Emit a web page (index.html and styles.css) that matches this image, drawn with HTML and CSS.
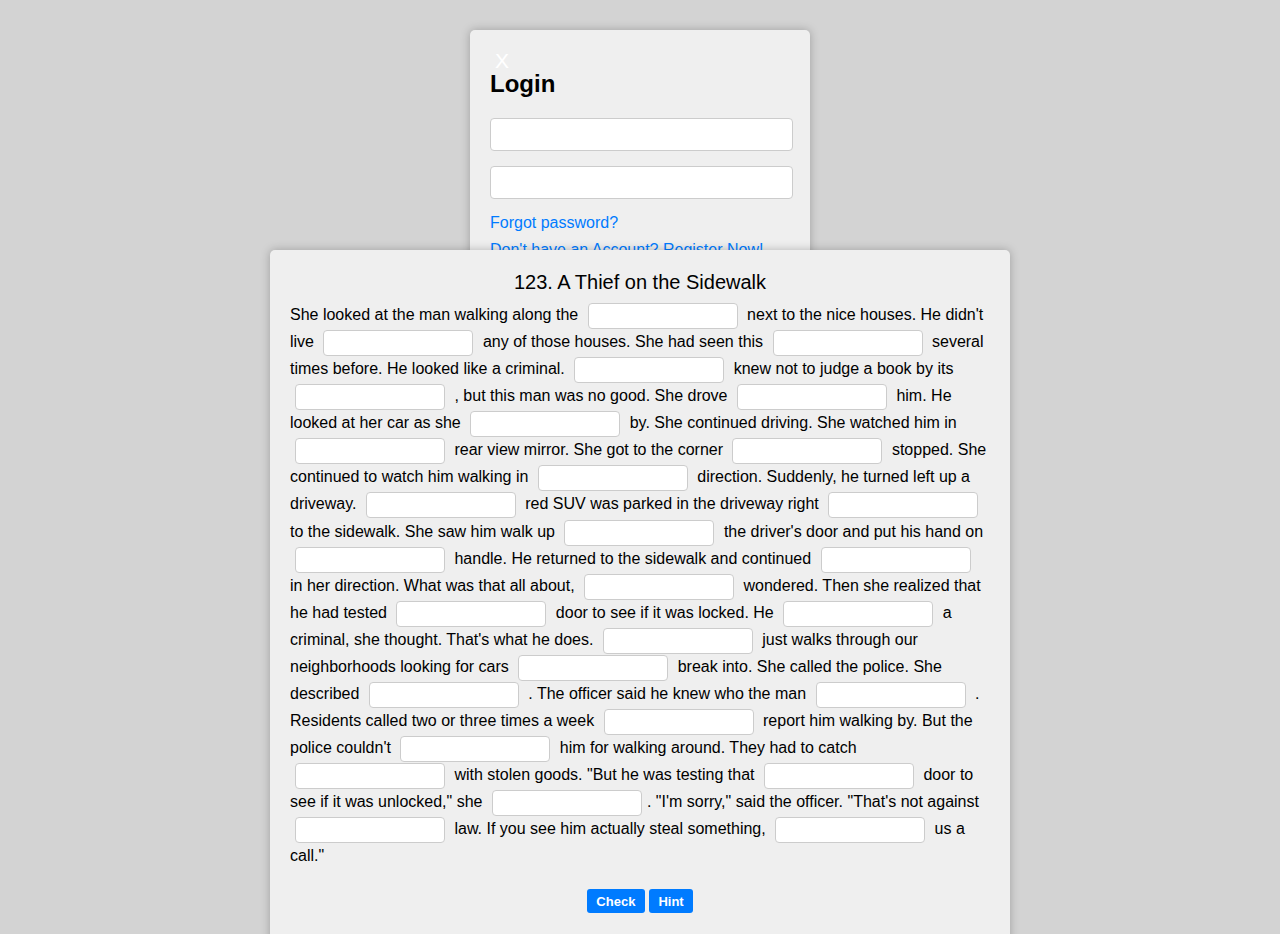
FILE: index.html
```html
<!DOCTYPE html>
<html>
<head>
<meta charset="utf-8">
<link rel="stylesheet" href="styles.css">
</head>
<body>
<div class="login">
  <span class="close">X</span>
  <h2 class="login-title">Login</h2>
  <input class="login-input" type="text">
  <input class="login-input" type="password">
  <div class="links">
    <a href="#">Forgot password?</a><br>
    <a href="#">Don't have an Account? Register Now!</a>
  </div>
</div>
<div class="story">
  <h3 class="story-title">123. A Thief on the Sidewalk</h3>
  <p class="story-text">She looked at the man walking along the <input class="gap" type="text"> next to the nice houses. He didn't live <input class="gap" type="text"> any of those houses. She had seen this <input class="gap" type="text"> several times before. He looked like a criminal. <input class="gap" type="text"> knew not to judge a book by its <input class="gap" type="text"> , but this man was no good. She drove <input class="gap" type="text"> him. He looked at her car as she <input class="gap" type="text"> by. She continued driving. She watched him in <input class="gap" type="text"> rear view mirror. She got to the corner <input class="gap" type="text"> stopped. She continued to watch him walking in <input class="gap" type="text"> direction. Suddenly, he turned left up a driveway. <input class="gap" type="text"> red SUV was parked in the driveway right <input class="gap" type="text"> to the sidewalk. She saw him walk up <input class="gap" type="text"> the driver's door and put his hand on <input class="gap" type="text"> handle. He returned to the sidewalk and continued <input class="gap" type="text"> in her direction. What was that all about, <input class="gap" type="text"> wondered. Then she realized that he had tested <input class="gap" type="text"> door to see if it was locked. He <input class="gap" type="text"> a criminal, she thought. That's what he does. <input class="gap" type="text"> just walks through our neighborhoods looking for cars <input class="gap" type="text"> break into. She called the police. She described <input class="gap" type="text"> . The officer said he knew who the man <input class="gap" type="text"> . Residents called two or three times a week <input class="gap" type="text"> report him walking by. But the police couldn't <input class="gap" type="text"> him for walking around. They had to catch <input class="gap" type="text"> with stolen goods. "But he was testing that <input class="gap" type="text"> door to see if it was unlocked," she <input class="gap" type="text">. "I'm sorry," said the officer. "That's not against <input class="gap" type="text"> law. If you see him actually steal something, <input class="gap" type="text"> us a call."</p>
  <div class="actions">
    <button class="btn">Check</button>
    <button class="btn">Hint</button>
  </div>
</div>
</body>
</html>
```
FILE: styles.css
```css
html, body {
  margin: 0;
  padding: 0;
}
body {
  background: #d3d3d3;
  font-family: "Liberation Sans", Arial, sans-serif;
  color: #000;
  min-height: 934px;
  position: relative;
  overflow: hidden;
}
.login {
  position: absolute;
  top: 30px;
  left: 470px;
  width: 340px;
  height: 280px;
  box-sizing: border-box;
  padding: 20px;
  background: #efefef;
  border-radius: 5px;
  box-shadow: 0 0 10px rgba(0, 0, 0, 0.25);
  z-index: 0;
}
.close {
  position: absolute;
  top: 19px;
  left: 25px;
  color: #fff;
  font-size: 21px;
  line-height: 24px;
}
.login-title {
  margin: 20px 0 0;
  font-size: 24px;
  font-weight: bold;
  line-height: 28px;
}
.login-input {
  display: block;
  box-sizing: border-box;
  width: 303px;
  height: 33px;
  margin: 20px 0 0;
  border: 1px solid #ccc;
  border-radius: 4px;
  background: #fff;
}
.login-input + .login-input {
  margin-top: 15px;
}
.links {
  margin-top: 10px;
  font-size: 16px;
  line-height: 27px;
}
.links a {
  color: #007bff;
  text-decoration: none;
}
.story {
  position: relative;
  z-index: 1;
  width: 740px;
  box-sizing: border-box;
  margin: 250px auto 0;
  padding: 21px 20px 20px;
  background: #efefef;
  border-radius: 5px;
  box-shadow: 0 0 10px rgba(0, 0, 0, 0.25);
  min-height: 700px;
}
.story-title {
  margin: 0 0 7px;
  text-align: center;
  font-size: 20px;
  font-weight: normal;
  line-height: 23px;
}
.story-text {
  margin: 0;
  font-size: 16px;
  line-height: 27.05px;
}
.gap {
  box-sizing: border-box;
  width: 150px;
  height: 26px;
  margin: 2px 5px -0.95px;
  padding: 0 4px;
  border: 1px solid #ccc;
  border-radius: 4px;
  background: #fff;
  vertical-align: top;
  font-family: inherit;
  font-size: 14px;
}
.actions {
  margin-top: 20px;
  text-align: center;
  font-size: 0;
}
.btn {
  height: 24px;
  padding: 0 9.5px;
  margin: 0 2px;
  border: none;
  border-radius: 3px;
  background: #007bff;
  color: #fff;
  font-family: "Liberation Sans", Arial, sans-serif;
  font-size: 13px;
  font-weight: bold;
}
```
